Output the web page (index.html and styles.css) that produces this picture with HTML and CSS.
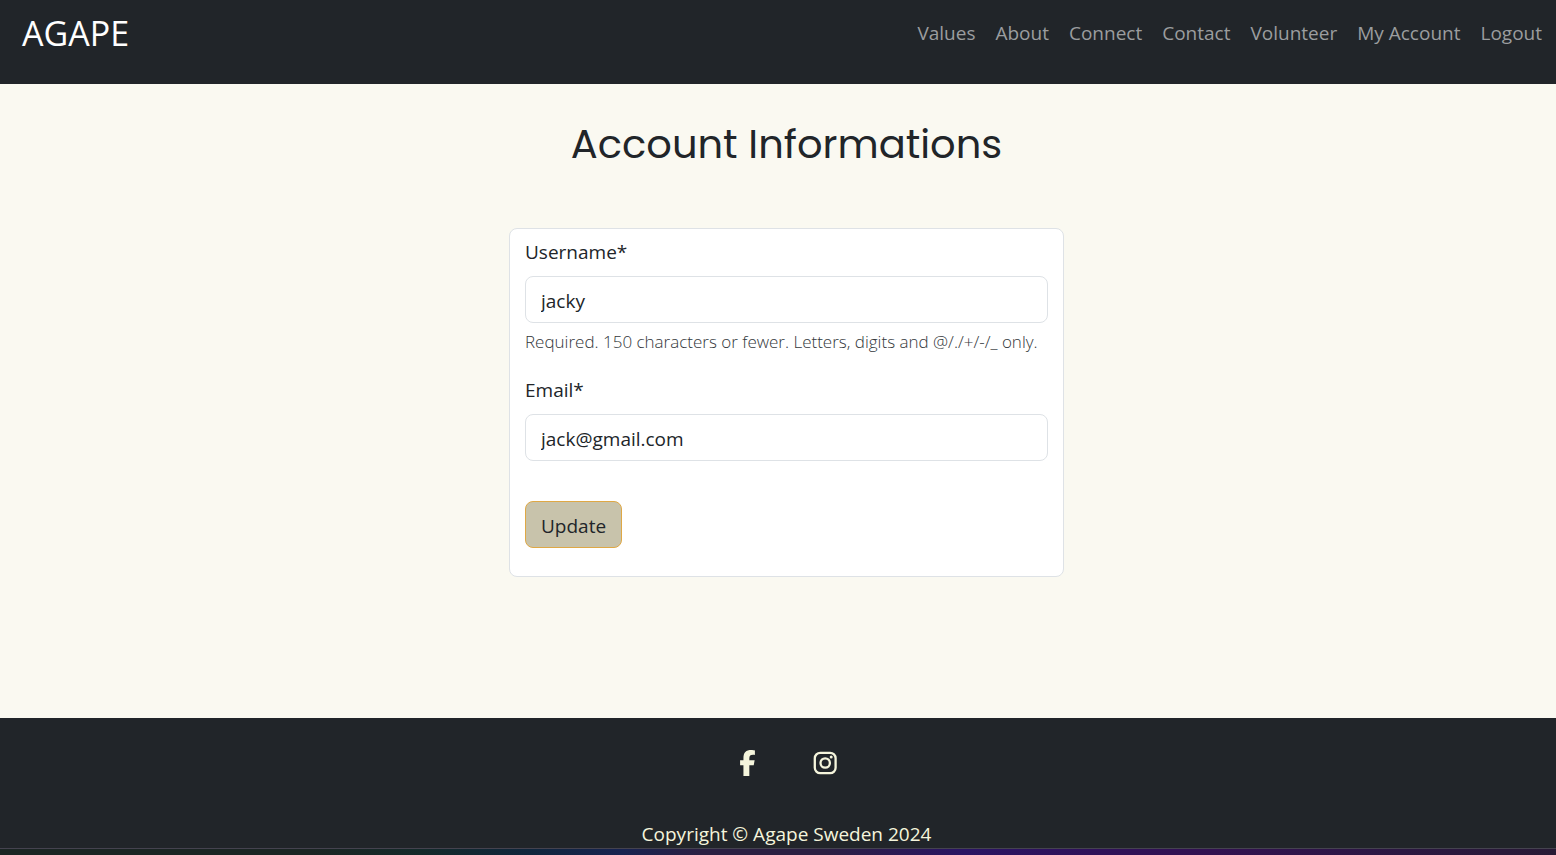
FILE: index.html
```html
<!DOCTYPE html>
<html lang="en">
<head>
  <meta charset="utf-8">
  <meta name="viewport" content="width=device-width, initial-scale=1">
  <title>Agape - Account Informations</title>
  <link rel="stylesheet" href="styles.css">
</head>
<body>
  <header class="navbar">
    <a class="brand" href="#">AGAPE</a>
    <nav class="nav-links" aria-label="Main">
      <a href="#">Values</a>
      <a href="#">About</a>
      <a href="#">Connect</a>
      <a href="#">Contact</a>
      <a href="#">Volunteer</a>
      <a href="#">My Account</a>
      <a href="#">Logout</a>
    </nav>
  </header>

  <main class="content">
    <h1 class="title">Account Informations</h1>
    <form class="card">
      <div class="field">
        <label for="username">Username*</label>
        <input id="username" type="text" value="jacky" aria-describedby="username-help">
        <p class="help" id="username-help">Required. 150 characters or fewer. Letters, digits and @/./+/-/_ only.</p>
      </div>
      <div class="field">
        <label for="email">Email*</label>
        <input id="email" type="email" value="jack@gmail.com">
      </div>
      <button class="update" type="button">Update</button>
    </form>
  </main>

  <footer class="footer">
    <div class="social">
      <a href="#" aria-label="Facebook">
        <svg class="icon-facebook" viewBox="0 0 320 512" aria-hidden="true"><path d="M80 299.300V512H196V299.300h86.500l18-97.800H196V166.900c0-51.700 20.300-71.500 72.700-71.500 16.300 0 29.400.4 37 1.200V7.900C291.400 4 256.400 0 236.200 0 129.300 0 80 50.500 80 159.400v42.100H14v97.800z"/></svg>
      </a>
      <a href="#" aria-label="Instagram">
        <svg class="icon-instagram" viewBox="0 0 24 24" aria-hidden="true"><rect x="1.800" y="1.800" width="20.800" height="20.400" rx="5.500"/><circle cx="12.200" cy="12" r="4.700"/><circle class="dot" cx="18.200" cy="5.900" r="1.500"/></svg>
      </a>
    </div>
    <p class="copyright">Copyright © Agape Sweden 2024</p>
  </footer>
  <div class="edge"></div>
</body>
</html>
```
FILE: styles.css
```css
*,
*::before,
*::after {
  box-sizing: border-box;
}

body {
  display: flex;
  flex-direction: column;
  min-height: 100vh;
  margin: 0;
  background: #faf9f1;
  color: #212529;
  font-family: "Segoe UI", "Open Sans", "Noto Sans", sans-serif;
  font-size: 19px;
  line-height: 28px;
}

a {
  color: inherit;
  text-decoration: none;
}

.navbar {
  display: flex;
  flex-wrap: wrap;
  justify-content: space-between;
  align-items: flex-start;
  gap: 20px;
  padding: 8px 14px 26px 22px;
  background: #212529;
}

.brand {
  color: #fff;
  font-size: 34px;
  line-height: 50px;
}

.nav-links {
  display: flex;
  flex-wrap: wrap;
  gap: 20px;
  padding-top: 11px;
  color: #9b9d9f;
}

.content {
  display: flex;
  flex: 1;
  flex-direction: column;
  align-items: center;
  gap: 60px;
  padding: 36px 0 60px 17px;
}

.title {
  margin: 0;
  font-family: Poppins, Inter, sans-serif;
  font-size: 40px;
  font-weight: 400;
  line-height: 48px;
}

.card {
  display: flex;
  flex-direction: column;
  align-items: stretch;
  width: 100%;
  max-width: 555px;
  padding: 9px 15px 28px;
  border: 1px solid #dee2e6;
  border-radius: 8px;
  background: #fff;
}

.field {
  display: flex;
  flex-direction: column;
  margin-bottom: 20px;
}

.field label {
  margin-bottom: 10px;
}

.field input {
  width: 100%;
  height: 47px;
  padding: 10px 15px 8px;
  border: 1px solid #dee2e6;
  border-radius: 8px;
  background: #fff;
  color: inherit;
  font: inherit;
}

.help {
  margin: 5px 0 0;
  padding-bottom: 1px;
  color: #33373b;
  font-size: 17px;
  font-weight: 300;
  line-height: 27px;
}

.update {
  align-self: flex-start;
  height: 47px;
  margin-top: 20px;
  padding: 2px 15px 0;
  border: 1px solid #dfa845;
  border-radius: 8px;
  background: #c8c3ab;
  color: inherit;
  font: inherit;
}

.footer {
  display: flex;
  flex-direction: column;
  align-items: center;
  gap: 44px;
  padding: 32px 0 0 17px;
  background: #212529;
  color: #f5f5dc;
}

.social {
  display: flex;
  align-items: center;
  gap: 57px;
  padding-left: 2px;
}

.social a {
  display: flex;
}

.icon-facebook {
  width: 17px;
  height: 26px;
  fill: currentColor;
}

.icon-instagram {
  width: 24px;
  height: 24px;
  fill: none;
  stroke: currentColor;
  stroke-width: 2.300;
}

.icon-instagram .dot {
  fill: currentColor;
  stroke: none;
}

.copyright {
  margin: 0;
}

.edge {
  height: 7px;
  border-top: 1px solid #45434f;
  background: linear-gradient(90deg, #1b2523 0%, #1b2523 20%, #142a2a 27%, #10263c 34%, #182350 40%, #2b1f42 45%, #2b1f42 53%, #2a1463 62%, #2f1159 70%, #321150 78%, #2b1741 90%, #281a35 100%);
}
```
